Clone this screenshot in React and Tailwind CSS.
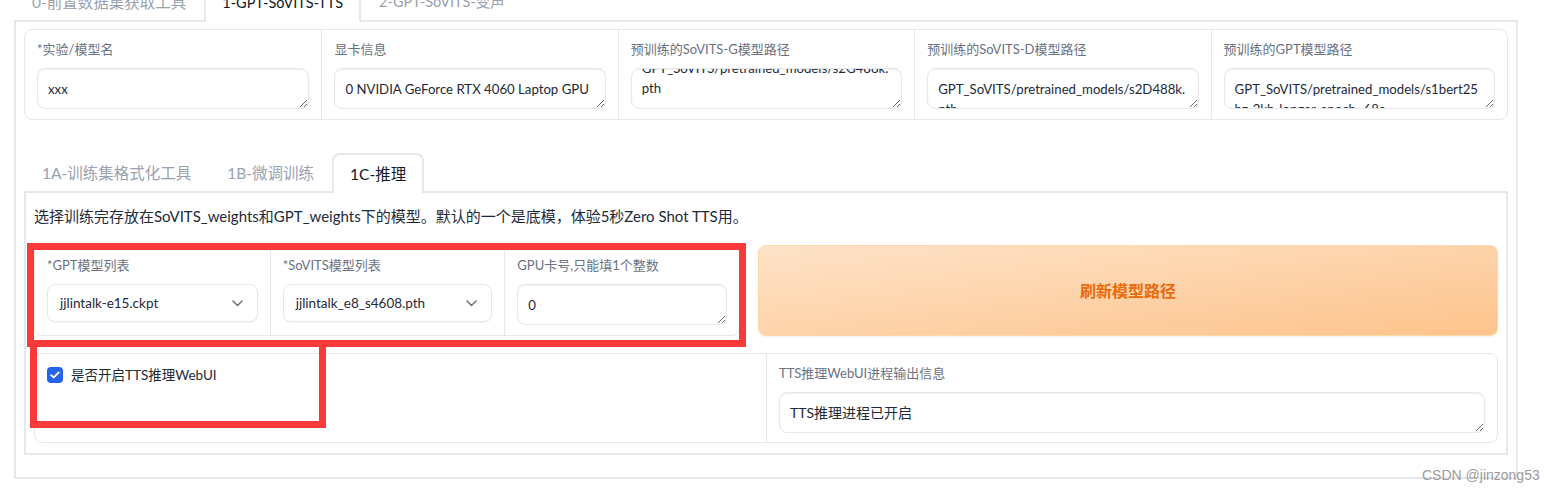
import React, { useEffect, useRef } from 'react';

const topFields = [
  { label: '*实验/模型名', value: 'xxx' },
  { label: '显卡信息', value: '0 NVIDIA GeForce RTX 4060 Laptop GPU' },
  { label: '预训练的SoVITS-G模型路径', value: 'GPT_SoVITS/pretrained_models/s2G488k.pth', scrollEnd: true },
  { label: '预训练的SoVITS-D模型路径', value: 'GPT_SoVITS/pretrained_models/s2D488k.pth' },
  { label: '预训练的GPT模型路径', value: 'GPT_SoVITS/pretrained_models/s1bert25hz-2kh-longer-epoch=68e-step=50232.ckpt' },
];

const TextArea = ({ value, scrollEnd, size = 'text-[13.2px]' }) => {
  const ref = useRef(null);

  useEffect(() => {
    if (scrollEnd && ref.current) {
      ref.current.scrollTop = ref.current.scrollHeight;
    }
  }, [scrollEnd]);

  return (
    <textarea
      ref={ref}
      rows={1}
      defaultValue={value}
      spellCheck={false}
      className={`block h-[41px] w-full resize-y overflow-hidden rounded-lg border border-gray-200 bg-white px-[10px] py-[10px] leading-[20px] text-gray-800 shadow-[inset_0_1px_2px_rgba(0,0,0,0.06)] outline-none ${size}`}
    />
  );
};

const Label = ({ children }) => (
  <div className="mb-[10px] h-[18px] text-[13px] leading-[18px] text-gray-500">{children}</div>
);

const Dropdown = ({ value }) => (
  <div className="flex h-[38px] items-center justify-between rounded-lg border border-gray-200 bg-white pl-3 pr-[14px] text-[13.5px] text-gray-800 shadow-[0_1px_2px_rgba(0,0,0,0.04)]">
    <span>{value}</span>
    <svg width="11" height="7" viewBox="0 0 11 7" fill="none">
      <path d="M1 1l4.5 4.5L10 1" stroke="#6b7280" strokeWidth="1.5" strokeLinecap="round" strokeLinejoin="round" />
    </svg>
  </div>
);

const Tab = ({ label, active, size = 'text-[15.5px]' }) =>
  active ? (
    <div className={`relative z-10 -mb-[2px] flex h-[40px] items-center rounded-t-lg border-2 border-b-0 border-gray-200 bg-white px-4 leading-[20px] text-gray-900 ${size}`}>
      {label}
    </div>
  ) : (
    <div className={`flex h-[38px] items-center border-2 border-b-0 border-transparent px-4 leading-[20px] text-gray-400 ${size}`}>
      {label}
    </div>
  );

const App = () => {
  return (
    <div className="relative h-[491px] overflow-hidden bg-white font-['Lato','Noto_Sans_CJK_SC',sans-serif]">
      <div className="ml-[14px] mt-[-18px] w-[1504px]">
        <div className="flex h-[38px] items-end">
          <Tab label="0-前置数据集获取工具" />
          <Tab label="1-GPT-SoVITS-TTS" active size="text-[14.5px]" />
          <Tab label="2-GPT-SoVITS-变声" size="text-[14.5px]" />
        </div>

        <div className="border-2 border-gray-200 px-2 pt-[7px] pb-[22px]">
          <div className="grid grid-cols-5 rounded-lg border border-gray-200 bg-white">
            {topFields.map((f, i) => (
              <div key={f.label} className={i > 0 ? 'border-l border-gray-200 px-3 py-[10px]' : 'px-3 py-[10px]'}>
                <Label>{f.label}</Label>
                <TextArea value={f.value} scrollEnd={f.scrollEnd} />
              </div>
            ))}
          </div>

          <div className="mt-[33px] flex h-[38px] items-end">
            <Tab label="1A-训练集格式化工具" />
            <Tab label="1B-微调训练" />
            <Tab label="1C-推理" active />
          </div>

          <div className="border-2 border-gray-200 px-2 pt-[11px] pb-[10px]">
            <p className="mb-[17px] text-[15px] leading-[24px] text-gray-800">
              选择训练完存放在SoVITS_weights和GPT_weights下的模型。默认的一个是底模，体验5秒Zero Shot TTS用。
            </p>

            <div className="flex h-[91px] gap-[18px]">
              <div className="grid w-[706px] grid-cols-3 items-start rounded-lg border border-gray-200 bg-white">
                <div className="px-3 pt-[10px]">
                  <Label>*GPT模型列表</Label>
                  <Dropdown value="jjlintalk-e15.ckpt" />
                </div>
                <div className="h-full border-l border-gray-200 px-3 pt-[10px]">
                  <Label>*SoVITS模型列表</Label>
                  <Dropdown value="jjlintalk_e8_s4608.pth" />
                </div>
                <div className="h-full border-l border-gray-200 px-3 pt-[10px]">
                  <Label>GPU卡号,只能填1个整数</Label>
                  <TextArea value="0" />
                </div>
              </div>
              <button className="flex-1 rounded-lg border border-[#fed7aa] bg-gradient-to-br from-[#fee3c8] to-[#fdc38b] text-[16px] font-semibold text-[#ea6a0c] shadow-[0_1px_2px_rgba(0,0,0,0.06)]">
                刷新模型路径
              </button>
            </div>

            <div className="mt-[17px] grid grid-cols-2 rounded-lg border border-gray-200 bg-white">
              <div className="px-3 pt-[10px]">
                <label className="flex h-[22px] items-center gap-2 text-[13.5px] text-gray-800">
                  <span className="flex h-4 w-4 items-center justify-center rounded-[4px] bg-[#2563eb]">
                    <svg width="10" height="8" viewBox="0 0 10 8" fill="none">
                      <path d="M1.2 4.2l2.4 2.3L8.8 1.4" stroke="white" strokeWidth="1.8" strokeLinecap="round" strokeLinejoin="round" />
                    </svg>
                  </span>
                  是否开启TTS推理WebUI
                </label>
              </div>
              <div className="border-l border-gray-200 px-3 pt-[10px] pb-[9px]">
                <Label>TTS推理WebUI进程输出信息</Label>
                <TextArea value="TTS推理进程已开启" size="text-[14px]" />
              </div>
            </div>
          </div>
        </div>
      </div>

      <div className="pointer-events-none absolute left-[27px] top-[243px] h-[104px] w-[719px] border-[7px] border-[#fa3a3a]" />
      <div className="pointer-events-none absolute left-[30px] top-[340px] h-[88px] w-[296px] border-[7px] border-[#fa3a3a]" />

      <div className="absolute left-[1422px] top-[465px] font-['Liberation_Sans',sans-serif] text-[14px] text-[#9a9a9a]">
        CSDN @jinzong53
      </div>
    </div>
  );
};

export default App;
